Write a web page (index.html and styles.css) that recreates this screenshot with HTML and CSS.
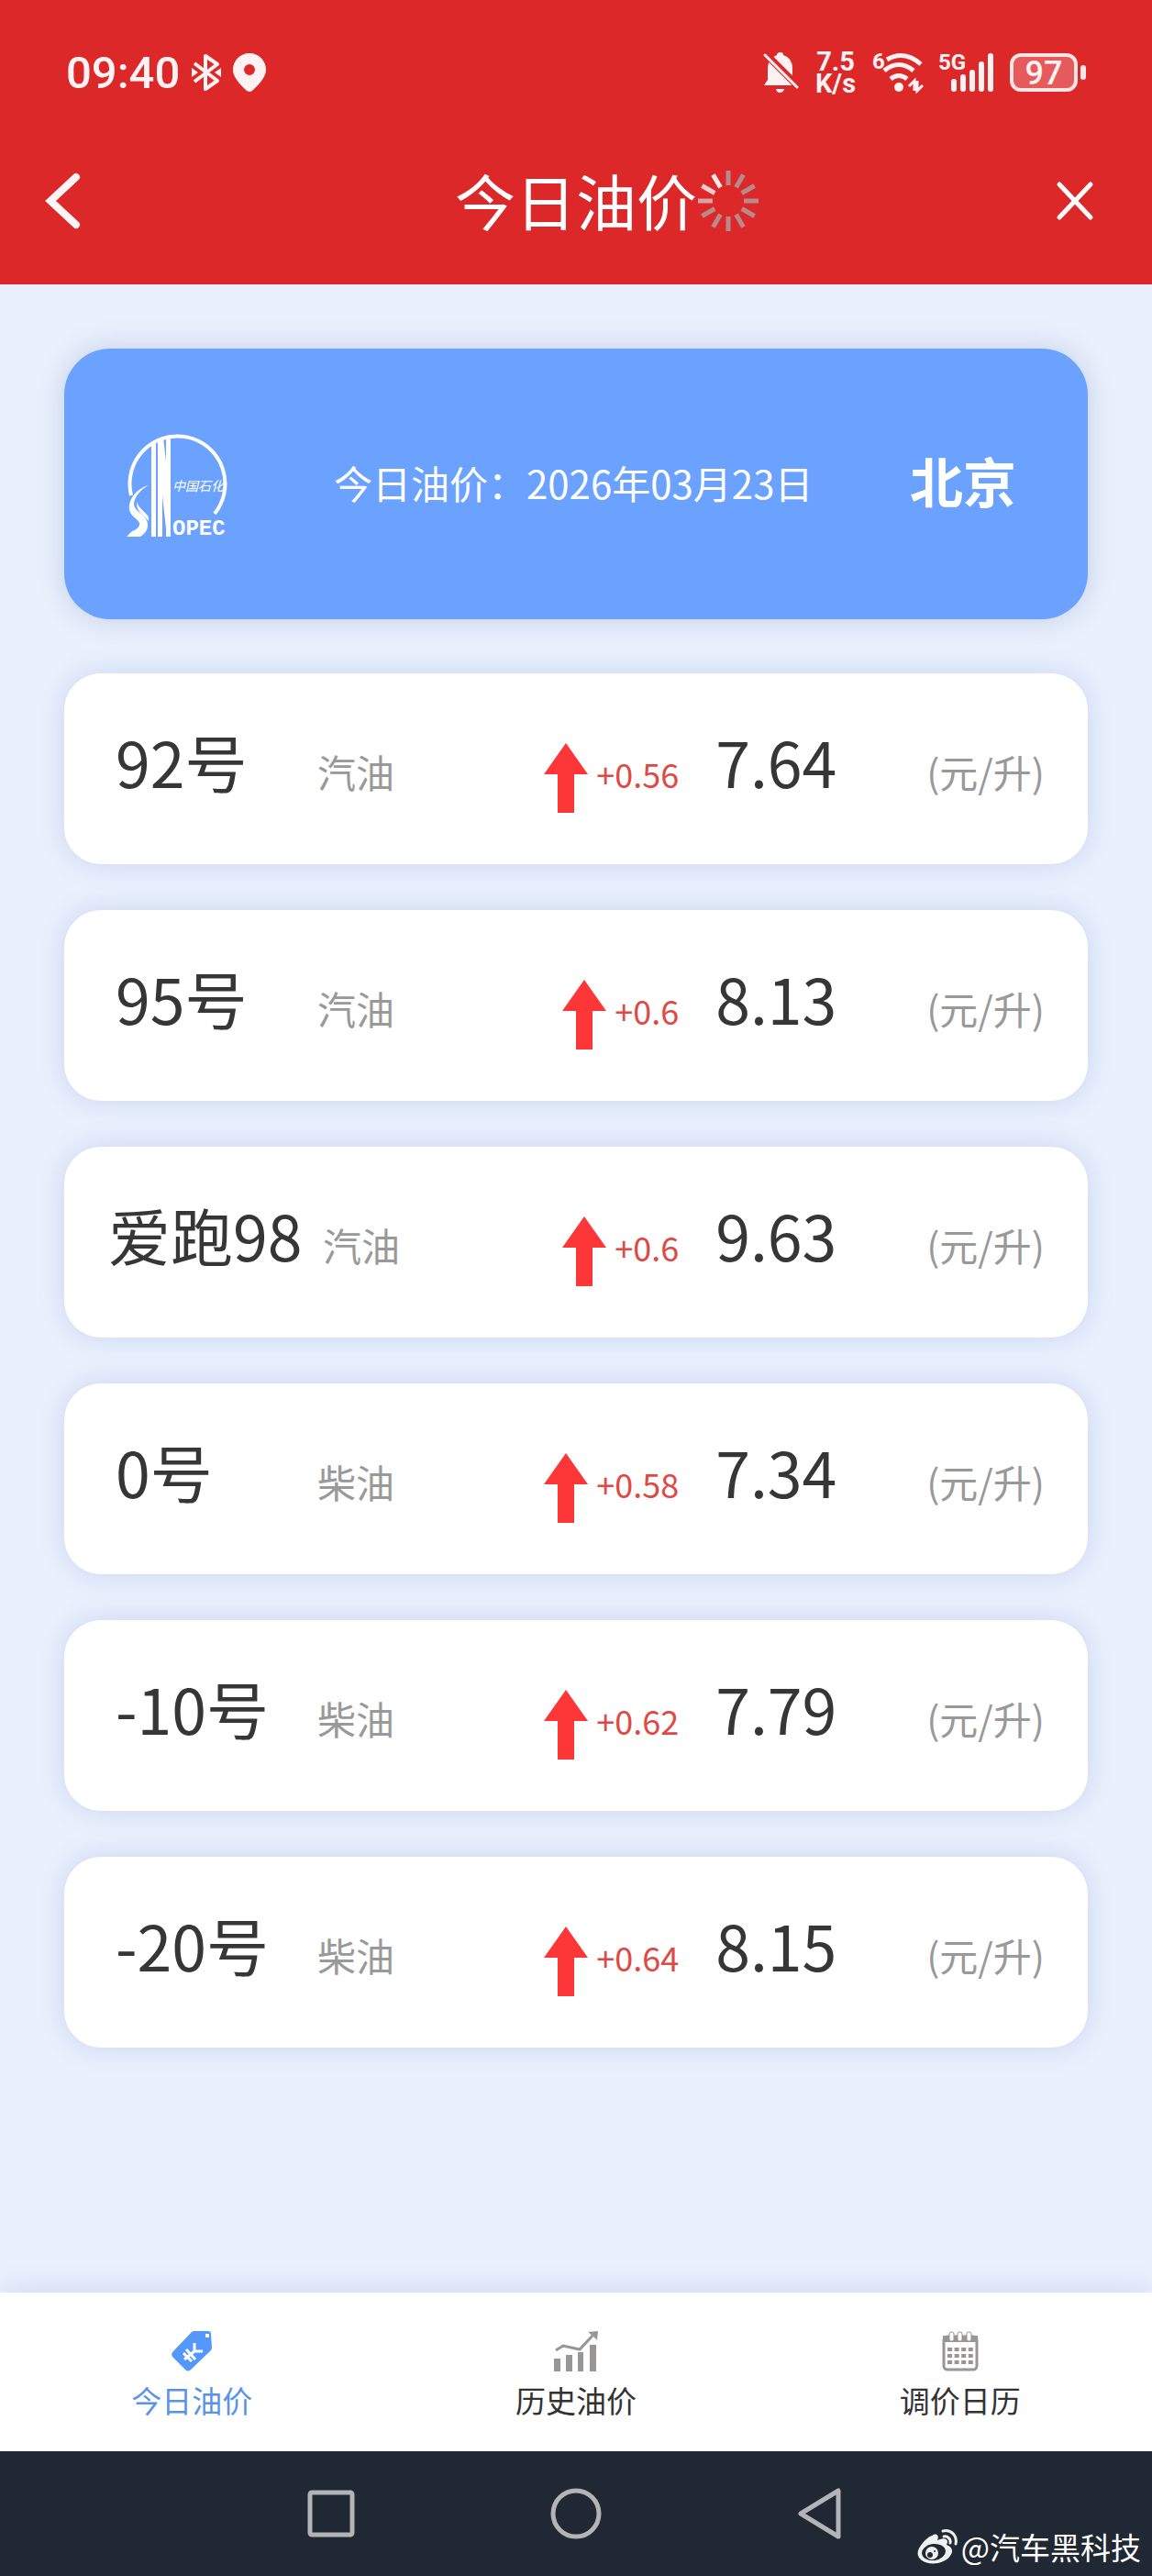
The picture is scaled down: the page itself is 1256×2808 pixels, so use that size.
FILE: index.html
```html
<!DOCTYPE html>
<html lang="zh-CN">
<head>
    <meta charset="UTF-8">
    <meta name="viewport" content="width=device-width, initial-scale=1.0">
    <title>今日油价</title>
    <link rel="stylesheet" href="styles.css">
</head>
<body>
<!-- shared shapes -->
<svg class="defs" aria-hidden="true">
    <symbol id="arrow-up" viewBox="0 0 48 76">
        <path d="M24 0L48 34H33V76H15V34H0Z" fill="#fd3738"></path>
    </symbol>
</svg>

<header class="header">
    <div class="status-bar">
        <div class="status-left">
            <span class="clock">09:40</span>
            <svg width="32" height="42" viewBox="0 0 32 42" aria-label="蓝牙">
                <path d="M3 11L28 30L15 39V3L28 12L3 31" fill="none" stroke="#fff2f2" stroke-width="4" stroke-linejoin="round"></path>
                <path d="M0 16L7 21L0 26ZM32 16L25 21L32 26Z" fill="#fff2f2"></path>
            </svg>
            <svg width="36" height="42" viewBox="0 0 36 42" aria-label="定位">
                <path fill-rule="evenodd" d="M18 0C8 0 0 8 0 18C0 27 9 35 14 40Q18 44 22 40C27 35 36 27 36 18C36 8 28 0 18 0ZM18 12A6 6 0 1 1 18 24A6 6 0 1 1 18 12Z" fill="#fff2f2"></path>
            </svg>
        </div>
        <div class="status-right">
            <svg width="39" height="44" viewBox="0 0 39 44" aria-label="静音">
                <path d="M19 0Q22 0 22 3Q32 6 32 18V26L38 36H1L5 30V18Q5 7 15 3Q15 0 19 0Z" fill="#fff2f2"></path>
                <path d="M14 40H23Q22 44 18 44Q15 44 14 40Z" fill="#fff2f2"></path>
                <path d="M2 1L38 37" stroke="#dc2829" stroke-width="8"></path>
                <path d="M2 3L37 38" stroke="#fff2f2" stroke-width="3" stroke-linecap="round"></path>
            </svg>
            <span class="speed"><span>7.5</span><span>K/s</span></span>
            <svg width="55" height="44" viewBox="0 0 55 44" aria-label="WiFi 6">
                <text x="0" y="18" class="tiny-text">6</text>
                <g fill="none" stroke="#fff2f2" stroke-width="5">
                    <path d="M16 8Q35 -3 53 13"></path>
                    <path d="M13 20Q29 7 45 20"></path>
                    <path d="M20 29Q29 22 38 29"></path>
                </g>
                <circle cx="29" cy="38" r="5" fill="#fff2f2"></circle>
                <path d="M40 37L46 31V42M49 31V42L55 36" fill="none" stroke="#fff2f2" stroke-width="3"></path>
            </svg>
            <svg width="61" height="44" viewBox="0 0 61 44" aria-label="5G 信号">
                <text x="0" y="19" class="tiny-text">5G</text>
                <path d="M17 32V40M27 27V40M37 22V40M47 13V40M57 4V40" stroke="#fff2f2" stroke-width="6" stroke-linecap="round"></path>
            </svg>
            <svg width="83" height="42" viewBox="0 0 83 42" aria-label="电量">
                <rect x="2" y="2" width="70" height="38" rx="10" fill="#e65a5b" stroke="#ffe6e6" stroke-width="4"></rect>
                <rect x="77" y="13" width="6" height="16" rx="3" fill="#ffe6e6"></rect>
                <text x="37" y="34" text-anchor="middle" class="battery-text">97</text>
            </svg>
        </div>
    </div>

    <div class="title-bar">
        <button class="icon-btn" aria-label="返回">
            <svg width="40" height="62" viewBox="0 0 40 62">
                <path d="M34 5L6 31L34 57" fill="none" stroke="#fff5f5" stroke-width="8" stroke-linecap="round"></path>
            </svg>
        </button>
        <h1>今日油价</h1>
        <div class="title-right">
            <svg class="spinner" width="68" height="68" viewBox="-34 -34 68 68" aria-label="加载中">
                <g stroke="#b78b8b" stroke-width="5">
                    <path d="M0 -17V-33"></path>
                    <path d="M0 -17V-33" transform="rotate(30)"></path>
                    <path d="M0 -17V-33" transform="rotate(60)"></path>
                    <path d="M0 -17V-33" transform="rotate(90)"></path>
                    <path d="M0 -17V-33" transform="rotate(120)"></path>
                    <path d="M0 -17V-33" transform="rotate(150)"></path>
                    <path d="M0 -17V-33" transform="rotate(180)"></path>
                    <path d="M0 -17V-33" transform="rotate(210)"></path>
                    <path d="M0 -17V-33" transform="rotate(240)"></path>
                    <path d="M0 -17V-33" transform="rotate(270)" stroke="#d7a3a3"></path>
                    <path d="M0 -17V-33" transform="rotate(300)" stroke="#f5cccc"></path>
                    <path d="M0 -17V-33" transform="rotate(330)" stroke="#ffe8e8"></path>
                </g>
            </svg>
            <button class="icon-btn close" aria-label="关闭">
                <svg width="40" height="42" viewBox="0 0 40 42">
                    <path d="M3 3L37 39M37 3L3 39" stroke="#fff" stroke-width="5" stroke-linecap="round"></path>
                </svg>
            </button>
        </div>
    </div>
</header>

<main class="content">
    <section class="banner">
        <svg class="logo" width="110" height="114" viewBox="0 0 110 114" aria-label="中国石化">
            <path d="M5 69A52 52 0 1 1 96 89" fill="none" stroke="#fff" stroke-width="4"></path>
            <path d="M27 12L32 9V114H27ZM34 8L39 5V114H34ZM43 4L48 3V114H43Z" fill="#fff"></path>
            <path d="M38 5L40 5L46 60V114H44L38 60Z" fill="#fff"></path>
            <path d="M24 58C10 62 2 74 3 84C4 92 12 94 14 99C15 104 9 107 6 108L0 114H15C25 108 25 98 19 92C14 87 8 84 8 78C9 70 15 63 24 58Z" fill="#fff"></path>
            <path d="M11 76C13 83 22 88 24 93V97C18 90 10 86 11 76Z" fill="#fff"></path>
            <text x="50" y="64" class="logo-cn">中国石化</text>
            <text x="50" y="112" class="logo-en">OPEC</text>
        </svg>
        <p class="banner-date">今日油价：2026年03月23日</p>
        <strong class="city">北京</strong>
    </section>

    <ul class="price-list">
        <li class="price-card">
            <span class="name">92号</span>
            <span class="type">汽油</span>
            <span class="change"><svg class="arrow"><use href="#arrow-up"></use></svg><span class="delta">+0.56</span></span>
            <span class="price">7.64</span>
            <span class="unit">(元/升)</span>
        </li>
        <li class="price-card">
            <span class="name">95号</span>
            <span class="type">汽油</span>
            <span class="change"><svg class="arrow"><use href="#arrow-up"></use></svg><span class="delta">+0.6</span></span>
            <span class="price">8.13</span>
            <span class="unit">(元/升)</span>
        </li>
        <li class="price-card wide-name">
            <span class="name">爱跑98</span>
            <span class="type">汽油</span>
            <span class="change"><svg class="arrow"><use href="#arrow-up"></use></svg><span class="delta">+0.6</span></span>
            <span class="price">9.63</span>
            <span class="unit">(元/升)</span>
        </li>
        <li class="price-card">
            <span class="name">0号</span>
            <span class="type">柴油</span>
            <span class="change"><svg class="arrow"><use href="#arrow-up"></use></svg><span class="delta">+0.58</span></span>
            <span class="price">7.34</span>
            <span class="unit">(元/升)</span>
        </li>
        <li class="price-card">
            <span class="name">-10号</span>
            <span class="type">柴油</span>
            <span class="change"><svg class="arrow"><use href="#arrow-up"></use></svg><span class="delta">+0.62</span></span>
            <span class="price">7.79</span>
            <span class="unit">(元/升)</span>
        </li>
        <li class="price-card">
            <span class="name">-20号</span>
            <span class="type">柴油</span>
            <span class="change"><svg class="arrow"><use href="#arrow-up"></use></svg><span class="delta">+0.64</span></span>
            <span class="price">8.15</span>
            <span class="unit">(元/升)</span>
        </li>
    </ul>
</main>

<nav class="tab-bar">
    <a href="#today" class="tab active">
        <svg width="44" height="44" viewBox="0 0 44 44">
            <path d="M24 0H40Q43 0 43 3L44 18Q44 20 42 22L21 42Q18 45 15 42L1 28Q-1 25 2 22L22 1Z" fill="#5598fc"></path>
            <rect x="37" y="3" width="4" height="4" fill="#fff"></rect>
            <path d="M14 31L25 22M25 22L25 13M25 22L34 22M16 20L26 31M13 24L22 33" stroke="#fff" stroke-width="3" fill="none"></path>
        </svg>
        <span>今日油价</span>
    </a>
    <a href="#history" class="tab">
        <svg width="48" height="44" viewBox="0 0 48 44">
            <path d="M0 30H7V44H0ZM13 26H20V44H13ZM26 23H32V44H26ZM39 15H46V44H39Z" fill="#999594"></path>
            <path d="M2 21L10 16L28 20L42 5" fill="none" stroke="#999594" stroke-width="3"></path>
            <path d="M37 1L48 0L47 10L43 6Z" fill="#999594"></path>
        </svg>
        <span>历史油价</span>
    </a>
    <a href="#calendar" class="tab">
        <svg width="40" height="44" viewBox="0 0 40 44">
            <rect x="2" y="6" width="36" height="36" rx="4" fill="#fff" stroke="#999594" stroke-width="3"></rect>
            <path d="M1 5H39V12H1Z" fill="#999594"></path>
            <g fill="#fff" stroke="#999594" stroke-width="1">
                <rect x="8" y="1" width="5" height="10" rx="2"></rect>
                <rect x="17" y="1" width="5" height="10" rx="2"></rect>
                <rect x="27" y="1" width="5" height="10" rx="2"></rect>
            </g>
            <path d="M6 20H34M6 27H34M6 34H34" stroke="#999594" stroke-width="4" stroke-dasharray="5 2.6"></path>
        </svg>
        <span>调价日历</span>
    </a>
</nav>

<footer class="system-nav">
    <button class="icon-btn" aria-label="最近任务">
        <svg width="56" height="56" viewBox="0 0 56 56"><rect x="5" y="5" width="46" height="46" rx="2" fill="none" stroke="#b4b4b6" stroke-width="5"></rect></svg>
    </button>
    <button class="icon-btn" aria-label="主屏幕">
        <svg width="56" height="56" viewBox="0 0 56 56"><circle cx="28" cy="28" r="25" fill="none" stroke="#b4b4b6" stroke-width="5"></circle></svg>
    </button>
    <button class="icon-btn" aria-label="返回上一页">
        <svg width="56" height="56" viewBox="0 0 56 56"><path d="M47 3V53L6 28Z" fill="none" stroke="#b4b4b6" stroke-width="5" stroke-linejoin="round"></path></svg>
    </button>
    <div class="watermark">
        <svg width="44" height="38" viewBox="0 0 44 38" aria-hidden="true">
            <path d="M16 7C22 3 24 8 22 12C31 8 35 11 32 17C38 19 40 24 36 29C30 38 13 40 5 34C-2 29 0 22 6 15C9 11 13 8 16 7Z" fill="#eef0f2"></path>
            <ellipse cx="18" cy="25" rx="13" ry="9" fill="#202833" transform="rotate(-8 18 25)"></ellipse>
            <circle cx="16" cy="26" r="7" fill="#eef0f2"></circle>
            <circle cx="14" cy="28" r="3" fill="#202833"></circle>
            <circle cx="19" cy="24" r="1" fill="#202833"></circle>
            <path d="M28 2C37 0 44 7 42 16M29 8C33 7 37 11 36 15" fill="none" stroke="#eef0f2" stroke-width="3" stroke-linecap="round"></path>
        </svg>
        <span>@汽车黑科技</span>
    </div>
</footer>
</body>
</html>
```

FILE: styles.css
```css
* {
    box-sizing: border-box;
}

body {
    font-family: "Noto Sans CJK SC", sans-serif;
    background-color: #e9f1fe;
    color: #363636;
    margin: 0;
    min-height: 100vh;
    display: flex;
    flex-direction: column;
}

h1,
p,
ul {
    margin: 0;
    padding: 0;
    font-weight: normal;
}

svg {
    display: block;
    flex-shrink: 0;
    overflow: visible;
}

.defs {
    position: absolute;
    width: 0;
    height: 0;
}

.icon-btn {
    background: none;
    border: none;
    padding: 0;
    cursor: pointer;
}

/* header */
.header {
    background-color: #dc2829;
    color: #fff;
}

.status-bar {
    display: flex;
    justify-content: space-between;
    align-items: center;
    padding: 48px 72px 0;
    height: 110px;
    font-family: Roboto, sans-serif;
    color: #fff2f2;
}

.status-left {
    display: flex;
    align-items: center;
    gap: 13px;
}

.status-right {
    display: flex;
    align-items: center;
    gap: 17px;
}

.clock {
    font-size: 49px;
    font-weight: 500;
}

.speed {
    display: flex;
    flex-direction: column;
    align-items: center;
    min-width: 46px;
    font-size: 29px;
    font-weight: 700;
    line-height: 24px;
}

.tiny-text {
    font-size: 24px;
    font-weight: 700;
    fill: #fff2f2;
}

.battery-text {
    font-size: 36px;
    font-weight: 500;
    fill: #fff2f2;
}

.title-bar {
    display: grid;
    grid-template-columns: 1fr auto 1fr;
    align-items: center;
    padding: 59px 49px 41px;
}

.title-bar .icon-btn {
    justify-self: start;
}

.title-bar h1 {
    padding-bottom: 4px;
    font-size: 66px;
    line-height: 96px;
}

.title-right {
    display: flex;
    justify-content: space-between;
    align-items: center;
}

.close {
    padding-right: 15px;
}

/* content */
.content {
    flex: 1;
    padding: 70px 70px 0;
}

.banner {
    display: flex;
    align-items: center;
    padding: 91px 78px 90px 68px;
    margin-bottom: 59px;
    background-color: #6ba2ff;
    border-radius: 50px;
    box-shadow: 0 0 30px rgba(80, 100, 150, 0.25);
    color: #fff;
}

.banner-date {
    margin-left: 116px;
    padding-bottom: 5px;
    font-size: 42px;
}

.city {
    margin-left: auto;
    padding-bottom: 10px;
    font-size: 58px;
    line-height: 58px;
}

.logo-cn {
    font-size: 14px;
    font-style: italic;
    fill: #fff;
}

.logo-en {
    font-family: "Liberation Sans Narrow", "Liberation Mono", monospace;
    font-size: 24px;
    font-weight: 700;
    fill: #fff;
}

.price-list {
    display: flex;
    flex-direction: column;
    gap: 50px;
    list-style: none;
}

.price-card {
    display: flex;
    align-items: baseline;
    padding: 62px 47px 56px 56px;
    background-color: #fff;
    border-radius: 40px;
    box-shadow: 0 0 30px rgba(80, 100, 170, 0.2);
}

.name,
.price {
    font-size: 68px;
    line-height: 68px;
}

.name {
    min-width: 220px;
}

.wide-name {
    padding-left: 48px;
}

.wide-name .name {
    min-width: 234px;
}

.type,
.unit {
    font-size: 42px;
    line-height: 42px;
    color: #999;
}

.change {
    display: flex;
    gap: 9px;
    margin-left: auto;
}

.arrow {
    width: 48px;
    height: 76px;
    align-self: flex-end;
}

.delta {
    align-self: baseline;
    font-size: 36px;
    line-height: 86px;
    color: #df4945;
}

.price {
    width: 230px;
    margin-left: 40px;
}

/* bottom tabs */
.tab-bar {
    display: flex;
    background-color: #fff;
    box-shadow: 0 0 30px rgba(80, 100, 170, 0.2);
}

.tab {
    flex: 1;
    display: flex;
    flex-direction: column;
    align-items: center;
    gap: 6px;
    padding: 42px 0 31px;
    font-size: 33px;
    line-height: 50px;
    color: #333;
    text-decoration: none;
}

.tab.active {
    color: #5a94e8;
}

/* system navigation */
.system-nav {
    position: relative;
    display: flex;
    justify-content: center;
    gap: 211px;
    padding: 40px 0;
    background-color: #202833;
}

.watermark {
    position: absolute;
    right: 12px;
    bottom: 10px;
    display: flex;
    align-items: center;
    gap: 4px;
    font-size: 33px;
    line-height: 44px;
    color: #fff;
}
```
